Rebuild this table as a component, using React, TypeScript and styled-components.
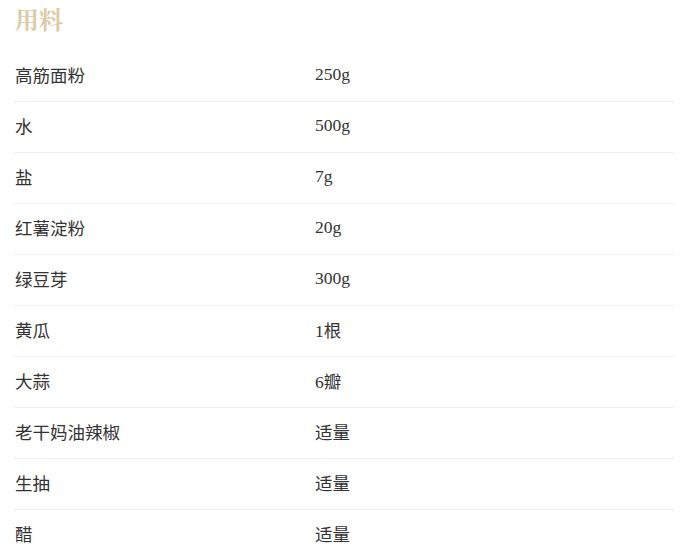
import styled, { createGlobalStyle } from 'styled-components';

const GlobalStyle = createGlobalStyle`
  body {
    margin: 0;
    background: #fff;
    font-family: "Liberation Serif", "Noto Sans CJK SC", serif;
  }
`;

const Section = styled.section`
  padding: 5px 16px 0 14px;
`;

const Title = styled.h2`
  margin: 0 0 0 1px;
  height: 46px;
  font-size: 24px;
  font-weight: bold;
  line-height: 28px;
  color: #dccba5;
  font-family: "Noto Serif CJK SC", "Noto Sans CJK SC", serif;
`;

const List = styled.ul`
  list-style: none;
  margin: 0;
  padding: 0;
`;

const Row = styled.li`
  display: flex;
  align-items: center;
  height: 47px;
  padding-bottom: 3px;
  border-bottom: 1px solid #f0f0f0;
  font-size: 17.5px;
  color: #333;
`;

const Name = styled.span`
  width: 300px;
  padding-left: 1px;
`;

const Amount = styled.span`
  flex: 1;
`;

const ingredients: [string, string][] = [
  ['高筋面粉', '250g'],
  ['水', '500g'],
  ['盐', '7g'],
  ['红薯淀粉', '20g'],
  ['绿豆芽', '300g'],
  ['黄瓜', '1根'],
  ['大蒜', '6瓣'],
  ['老干妈油辣椒', '适量'],
  ['生抽', '适量'],
  ['醋', '适量'],
];

export default function App() {
  return (
    <>
      <GlobalStyle />
      <Section>
        <Title>用料</Title>
        <List>
          {ingredients.map(([name, amount]) => (
            <Row key={name}>
              <Name>{name}</Name>
              <Amount>{amount}</Amount>
            </Row>
          ))}
        </List>
      </Section>
    </>
  );
}
